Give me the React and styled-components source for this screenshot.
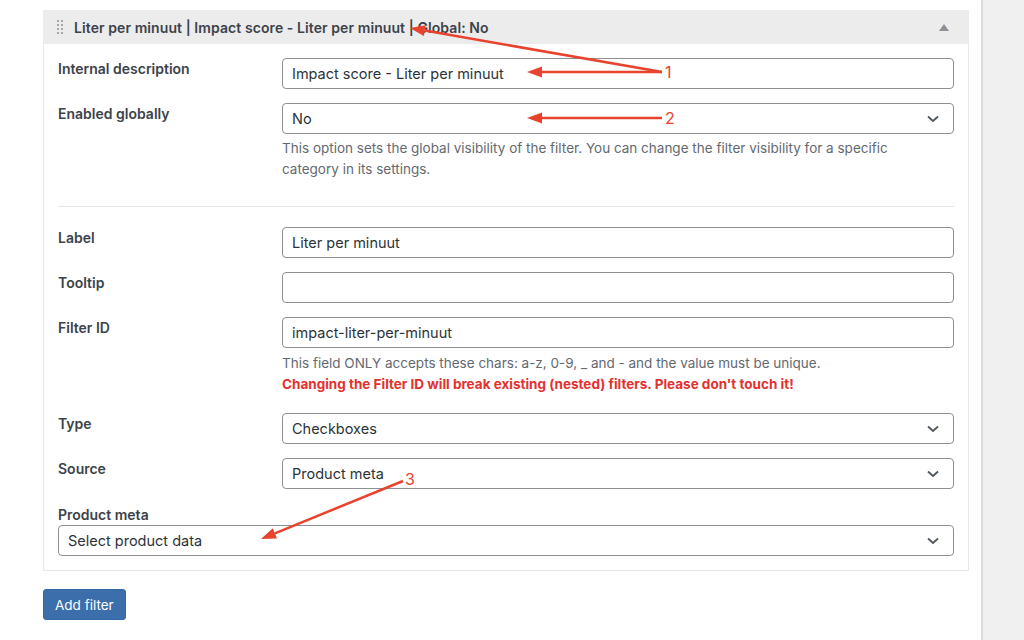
import React from "react";
import styled, { createGlobalStyle } from "styled-components";

const GlobalStyle = createGlobalStyle`
  html, body {
    margin: 0;
    padding: 0;
    background: #fff;
    font-family: Inter, "Open Sans", "Liberation Sans", sans-serif;
    color: #1d2327;
  }
`;

const Page = styled.div`
  display: flex;
  width: 1024px;
  height: 640px;
  overflow: hidden;
  position: relative;
`;

const Main = styled.div`
  width: 938px;
  padding: 10px 0 0 43px;
`;

const Sidebar = styled.div`
  flex: 1;
  border-left: 2px solid #dcdcde;
  background: #f0f0f1;
`;

const Panel = styled.div`
  width: 924px;
  border: 1px solid #e8e8e8;
  border-top: none;
  background: #fff;
`;

const PanelHead = styled.div`
  height: 34px;
  display: flex;
  align-items: center;
  background: #ececec;
  margin: 0 -1px;
  padding: 0 20px 0 14px;
`;

const Handle = styled.svg`
  width: 6px;
  height: 14px;
  margin-right: 11px;
  flex-shrink: 0;
`;

const Title = styled.div`
  flex: 1;
  font-size: 14px;
  font-weight: 600;
  color: #3c434a;
  letter-spacing: 0.08px;
`;

const Toggle = styled.span`
  width: 0;
  height: 0;
  border-left: 5px solid transparent;
  border-right: 5px solid transparent;
  border-bottom: 7px solid #8c8f94;
`;

const PanelBody = styled.div`
  padding: 14px;
`;

const Row = styled.div`
  display: grid;
  grid-template-columns: 224px 1fr;
  margin-bottom: ${(p) => p.$gap || 14}px;
`;

const Stacked = styled.div`
  display: flex;
  flex-direction: column;
`;

const Label = styled.label`
  font-size: 14px;
  font-weight: 600;
  color: #3c434a;
  line-height: 20px;
  padding-top: ${(p) => (p.$top ? 0 : 1)}px;
`;

const Field = styled.div`
  display: flex;
  flex-direction: column;
`;

const Box = styled.div`
  height: 29px;
  border: 1px solid #8c8f94;
  border-radius: 4px;
  display: flex;
  align-items: center;
  padding: 0 14px 0 9px;
  font-size: 14.5px;
  color: #2c3338;
  background: #fff;
`;

const Value = styled.span`
  flex: 1;
`;

const Chevron = styled.svg`
  width: 12px;
  height: 8px;
`;

const Help = styled.p`
  margin: ${(p) => p.$top || 4}px 0 0;
  font-size: 13.5px;
  line-height: 21px;
  color: #646970;
  padding-right: 40px;
`;

const Warning = styled.p`
  margin: 0;
  font-size: 13.5px;
  line-height: 21px;
  font-weight: 700;
  color: #e3312f;
`;

const Divider = styled.hr`
  border: none;
  border-top: 1px solid #e6e6e6;
  margin: 0 0 20px;
`;

const Button = styled.button`
  margin-top: 18px;
  height: 31px;
  padding: 0 11px;
  border: 1px solid #3568a2;
  border-radius: 3px;
  background: #3b6eaa;
  color: #fff;
  font-family: inherit;
  font-size: 13.5px;
`;

const Notes = styled.svg`
  position: absolute;
  left: 0;
  top: 0;
  width: 1024px;
  height: 640px;
  pointer-events: none;
`;

const Num = styled.text`
  font-family: Inter, "Liberation Sans", sans-serif;
  font-size: 16px;
  fill: #e8432d;
`;

const Select = ({ value }) => (
  <Box>
    <Value>{value}</Value>
    <Chevron viewBox="0 0 12 8">
      <polyline points="1 1.5 6 6 11 1.5" fill="none" stroke="#50575e" strokeWidth="1.8" />
    </Chevron>
  </Box>
);

const Arrow = ({ x1, y1, x2, y2 }) => {
  const a = Math.atan2(y2 - y1, x2 - x1);
  const len = 15;
  const w = 5.5;
  const bx = x2 - Math.cos(a) * len;
  const by = y2 - Math.sin(a) * len;
  const px = -Math.sin(a) * w;
  const py = Math.cos(a) * w;
  return (
    <g>
      <line x1={x1} y1={y1} x2={bx} y2={by} stroke="#e8432d" strokeWidth="2.5" />
      <polygon
        points={`${x2},${y2} ${bx + px},${by + py} ${bx - px},${by - py}`}
        fill="#e8432d"
      />
    </g>
  );
};

export default function App() {
  return (
    <Page>
      <GlobalStyle />
      <Main>
        <Panel>
          <PanelHead>
            <Handle viewBox="0 0 6 14">
              {[1, 5, 9, 13].map((y) => (
                <g key={y} fill="#8c8f94">
                  <circle cx="1" cy={y} r="1" />
                  <circle cx="5" cy={y} r="1" />
                </g>
              ))}
            </Handle>
            <Title>Liter per minuut | Impact score - Liter per minuut | Global: No</Title>
            <Toggle />
          </PanelHead>
          <PanelBody>
            <Row>
              <Label>Internal description</Label>
              <Box>Impact score - Liter per minuut</Box>
            </Row>
            <Row $gap={26}>
              <Label>Enabled globally</Label>
              <Field>
                <Select value="No" />
                <Help>
                  This option sets the global visibility of the filter. You can change the filter
                  visibility for a specific category in its settings.
                </Help>
              </Field>
            </Row>
            <Divider />
            <Row>
              <Label>Label</Label>
              <Box>Liter per minuut</Box>
            </Row>
            <Row>
              <Label>Tooltip</Label>
              <Box />
            </Row>
            <Row $gap={18}>
              <Label>Filter ID</Label>
              <Field>
                <Box>impact-liter-per-minuut</Box>
                <Help $top={5}>
                  This field ONLY accepts these chars: a-z, 0-9, _ and - and the value must be unique.
                </Help>
                <Warning>
                  Changing the Filter ID will break existing (nested) filters. Please don't touch it!
                </Warning>
              </Field>
            </Row>
            <Row>
              <Label>Type</Label>
              <Select value="Checkboxes" />
            </Row>
            <Row $gap={16}>
              <Label>Source</Label>
              <Select value="Product meta" />
            </Row>
            <Stacked>
              <Label $top>Product meta</Label>
              <Select value="Select product data" />
            </Stacked>
          </PanelBody>
        </Panel>
        <Button>Add filter</Button>
      </Main>
      <Sidebar />
      <Notes viewBox="0 0 1024 640">
        <Arrow x1={662} y1={72} x2={410} y2={28} />
        <Arrow x1={662} y1={72} x2={527} y2={72} />
        <Num x={665} y={78}>1</Num>
        <Arrow x1={662} y1={118} x2={527} y2={118} />
        <Num x={665} y={124}>2</Num>
        <Arrow x1={403} y1={481} x2={261} y2={539} />
        <Num x={405} y={485}>3</Num>
      </Notes>
    </Page>
  );
}
